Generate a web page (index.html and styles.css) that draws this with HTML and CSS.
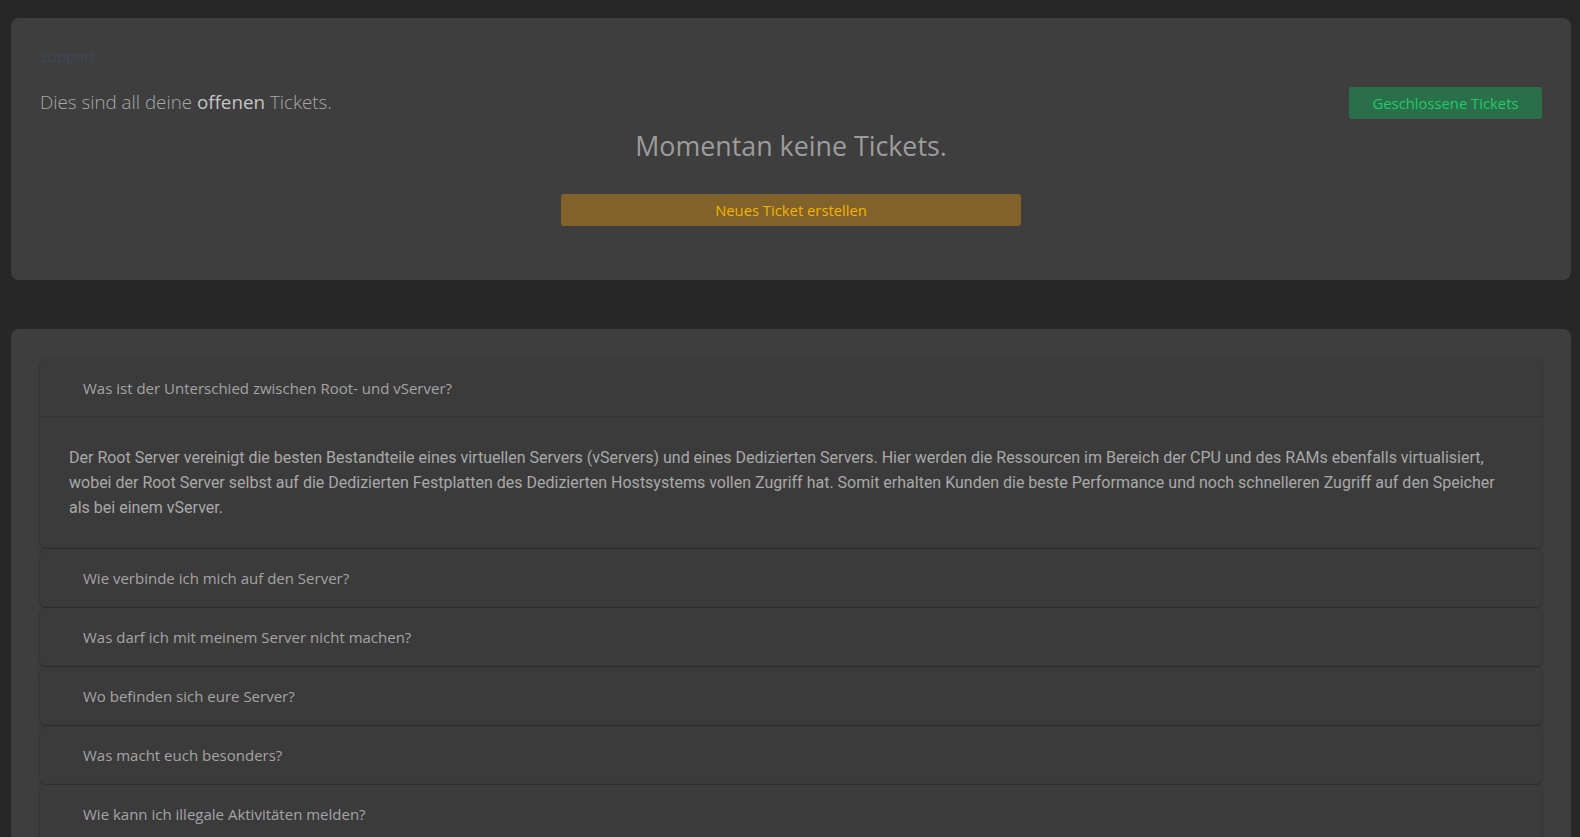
FILE: index.html
```html
<!DOCTYPE html>
<html lang="de">
<head>
<meta charset="utf-8">
<title>Support</title>
<link rel="stylesheet" href="styles.css">
</head>
<body>
<main class="page">
  <section class="card tickets">
    <div class="crumb">Support</div>
    <div class="ticket-row">
      <p class="lead">Dies sind all deine <strong>offenen</strong> Tickets.</p>
      <a class="btn btn-green" href="#">Geschlossene Tickets</a>
    </div>
    <h2 class="empty">Momentan keine Tickets.</h2>
    <div class="center">
      <a class="btn btn-yellow" href="#">Neues Ticket erstellen</a>
    </div>
  </section>

  <section class="card faq">
    <div class="item open">
      <div class="item-head">Was ist der Unterschied zwischen Root- und vServer?</div>
      <div class="item-body">Der Root Server vereinigt die besten Bestandteile eines virtuellen Servers (vServers) und eines Dedizierten Servers. Hier werden die Ressourcen im Bereich der CPU und des RAMs ebenfalls virtualisiert, wobei der Root Server selbst auf die Dedizierten Festplatten des Dedizierten Hostsystems vollen Zugriff hat. Somit erhalten Kunden die beste Performance und noch schnelleren Zugriff auf den Speicher als bei einem vServer.</div>
    </div>
    <div class="item"><div class="item-head">Wie verbinde ich mich auf den Server?</div></div>
    <div class="item"><div class="item-head">Was darf ich mit meinem Server nicht machen?</div></div>
    <div class="item"><div class="item-head">Wo befinden sich eure Server?</div></div>
    <div class="item"><div class="item-head">Was macht euch besonders?</div></div>
    <div class="item"><div class="item-head">Wie kann ich illegale Aktivitäten melden?</div></div>
  </section>
</main>
</body>
</html>
```

FILE: styles.css
```css
* { box-sizing: border-box; }
html, body { margin: 0; padding: 0; }
body {
  background: #272727;
  font-family: "Open Sans", "DejaVu Sans", sans-serif;
  color: #a6a6a6;
}
.page {
  padding: 18px 9px 0 11px;
  display: flex;
  flex-direction: column;
  gap: 49px;
}
.card {
  background: #3e3e3e;
  border-radius: 8px;
}
.tickets {
  padding: 29px 29px 54px 29px;
  height: 262px;
}
.crumb {
  font-size: 14.8px;
  line-height: 18px;
  color: #3d4857;
}
.ticket-row {
  margin-top: 22px;
  display: flex;
  align-items: center;
  justify-content: space-between;
}
.lead {
  margin: 0;
  font-size: 18.8px;
  line-height: 26px;
  font-weight: 300;
  color: #a8a8a8;
  position: relative;
  top: -1px;
}
.lead strong {
  font-weight: 400;
  color: #c4c4c4;
}
.btn {
  display: inline-flex;
  align-items: center;
  justify-content: center;
  height: 32px;
  border-radius: 3px;
  font-size: 14.8px;
  text-decoration: none;
}
.btn-green {
  width: 193px;
  background: #2b6e4a;
  color: #22c96a;
}
.btn-yellow {
  width: 460px;
  background: #80622a;
  color: #f2b400;
}
.empty {
  margin: 9px 0 0;
  text-align: center;
  font-size: 26.8px;
  line-height: 36px;
  font-weight: 500;
  color: #9c9c9c;
}
.center {
  margin-top: 30px;
  display: flex;
  justify-content: center;
}
.faq {
  padding: 30px 29px 30px 29px;
  display: flex;
  flex-direction: column;
  gap: 1px;
}
.item {
  background: #3b3b3b;
  border-radius: 6px;
  box-shadow: 0 1px 3px rgba(0, 0, 0, 0.35);
}
.item-head {
  height: 58px;
  display: flex;
  align-items: center;
  padding-left: 43px;
  font-size: 15px;
  color: #a4a4a4;
}
.item.open .item-head {
  border-bottom: 1px solid #333333;
}
.item-body {
  padding: 28px 29px 28px 29px;
  font-family: Roboto, "Liberation Sans", sans-serif;
  font-size: 16px;
  line-height: 25px;
  color: #a9a9a9;
}
```
